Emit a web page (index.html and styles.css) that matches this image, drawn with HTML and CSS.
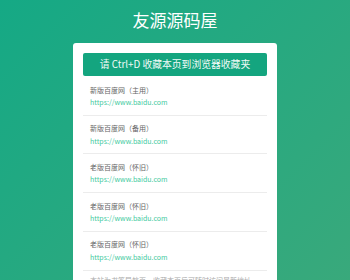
FILE: index.html
```html
<!DOCTYPE html>
<html lang="zh-CN">
<head>
    <meta charset="UTF-8">
    <meta name="viewport" content="width=device-width, initial-scale=1.0">
    <title>友源源码屋</title>
    <link rel="stylesheet" href="styles.css">
</head>
<body>
    <h1 class="title">友源源码屋</h1>
    <div class="card">
        <div class="fav-btn">请 Ctrl+D 收藏本页到浏览器收藏夹</div>
        <ul class="site-list">
            <li class="site">
                <div class="site-name">新版百度网（主用）</div>
                <a class="site-url" href="#">https://www.baidu.com</a>
            </li>
            <li class="site">
                <div class="site-name">新版百度网（备用）</div>
                <a class="site-url" href="#">https://www.baidu.com</a>
            </li>
            <li class="site">
                <div class="site-name">老版百度网（怀旧）</div>
                <a class="site-url" href="#">https://www.baidu.com</a>
            </li>
            <li class="site">
                <div class="site-name">老版百度网（怀旧）</div>
                <a class="site-url" href="#">https://www.baidu.com</a>
            </li>
            <li class="site">
                <div class="site-name">老版百度网（怀旧）</div>
                <a class="site-url" href="#">https://www.baidu.com</a>
            </li>
        </ul>
        <p class="note">本站为书签导航页，收藏本页后可随时访问最新地址</p>
    </div>
</body>
</html>
```

FILE: styles.css
```css
body {
    margin: 0;
    min-height: 100vh;
    font-family: "Noto Sans CJK SC", "Liberation Sans", sans-serif;
    background: linear-gradient(135deg, #15a985, #3aa97b);
    overflow: hidden;
}
.title {
    margin: 0;
    padding-top: 7px;
    height: 36px;
    text-align: center;
    color: #fff;
    font-size: 17px;
    font-weight: normal;
    line-height: 25px;
}
.card {
    width: 184px;
    margin: 0 auto;
    padding: 10px;
    background-color: #fff;
    border-radius: 3px;
}
.fav-btn {
    height: 23px;
    line-height: 23px;
    text-align: center;
    color: #f2fbf8;
    font-size: 9.8px;
    background-color: #14a57f;
    border-radius: 2px;
}
.site-list {
    list-style: none;
    margin: 1px 0 0;
    padding: 0;
}
.site {
    padding: 6.5px 7px 6.4px;
    border-bottom: 1px solid #ececec;
}
.site-name {
    color: #666;
    font-size: 7px;
    line-height: 12.4px;
}
.site-url {
    display: block;
    color: #3fcaa0;
    font-size: 7px;
    line-height: 12.4px;
    text-decoration: none;
}
.note {
    margin: 3px 7px 0;
    color: #aaa;
    font-size: 7px;
    line-height: 12px;
}
```
